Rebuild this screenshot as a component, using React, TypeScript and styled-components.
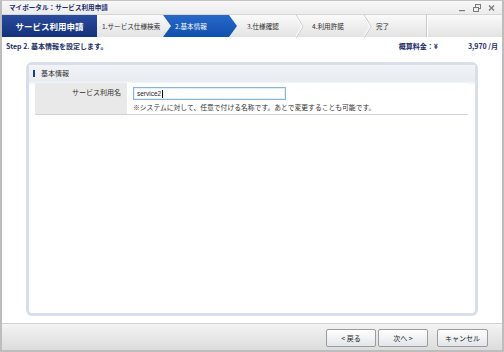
import React from "react";
import styled, { createGlobalStyle } from "styled-components";

const GlobalStyle = createGlobalStyle`
  html, body {
    margin: 0;
    padding: 0;
    background: #fff;
  }
  * {
    box-sizing: border-box;
  }
  body {
    font-family: "Noto Sans CJK JP", "Noto Sans", sans-serif;
  }
`;

const steps = [
  { label: "1.サービス仕様検索", width: 66, pad: 5, chevron: false },
  { label: "2.基本情報", width: 74, pad: 12, active: true, chevron: false },
  { label: "3.仕様確認", width: 59, pad: 10, chevron: true },
  { label: "4.利用許諾", width: 60, pad: 8, chevron: true },
  { label: "完了", width: 55, pad: 4, chevron: false, last: true },
];

function Chevron() {
  return (
    <ChevronSvg width="8" height="23" viewBox="0 0 8 23">
      <polyline points="0,0 7,11.5 0,23" fill="none" stroke="#c9c9c9" strokeWidth="1" />
      <polyline points="-1,0 6,11.5 -1,23" fill="none" stroke="#ffffff" strokeWidth="1" />
    </ChevronSvg>
  );
}

function WindowControls() {
  return (
    <Controls>
      <svg width="7" height="8" viewBox="0 0 7 8">
        <rect x="0" y="6" width="6" height="1.2" fill="#7a7a7a" />
      </svg>
      <svg width="8" height="8" viewBox="0 0 8 8">
        <rect x="2.5" y="0.5" width="5" height="4" fill="none" stroke="#7a7a7a" />
        <rect x="0.5" y="3.5" width="5" height="4" fill="#f0f0f0" stroke="#7a7a7a" />
      </svg>
      <svg width="7" height="8" viewBox="0 0 7 8">
        <path d="M1 1.5 L6 6.5 M6 1.5 L1 6.5" stroke="#7a7a7a" strokeWidth="1.3" />
      </svg>
    </Controls>
  );
}

export default function App() {
  return (
    <>
      <GlobalStyle />
      <Window>
        <TitleBar>
          <TitleText>マイポータル：サービス利用申請</TitleText>
          <WindowControls />
        </TitleBar>
        <TabBar>
          <Brand>サービス利用申請</Brand>
          {steps.map((s) => (
            <React.Fragment key={s.label}>
              <Step width={s.width} pad={s.pad} active={!!s.active} last={!!s.last}>
                {s.label}
              </Step>
              {s.chevron && <Chevron />}
            </React.Fragment>
          ))}
        </TabBar>
        <StepRow>
          <StepTitle>Step 2. 基本情報を設定します。</StepTitle>
          <Price>
            <PriceLabel>概算料金：¥</PriceLabel>
            <PriceValue>3,970 /月</PriceValue>
          </Price>
        </StepRow>
        <Panel>
          <PanelHeader>
            <HeaderBar />
            基本情報
          </PanelHeader>
          <PanelBody>
            <FormRow>
              <LabelCell>サービス利用名</LabelCell>
              <ValueCell>
                <NameInput>
                  service2
                  <Caret />
                </NameInput>
                <Hint>※システムに対して、任意で付ける名称です。あとで変更することも可能です。</Hint>
              </ValueCell>
            </FormRow>
          </PanelBody>
        </Panel>
        <Footer>
          <Button>&lt; 戻る</Button>
          <Button>次へ &gt;</Button>
          <CancelButton>キャンセル</CancelButton>
        </Footer>
      </Window>
    </>
  );
}

const Window = styled.div`
  width: 504px;
  height: 352px;
  display: flex;
  flex-direction: column;
  border: 2px solid #bdbdbd;
  border-top: 1px solid #c4c4c4;
  background: #fff;
`;

const TitleBar = styled.div`
  height: 13px;
  flex-shrink: 0;
  display: flex;
  align-items: center;
  justify-content: space-between;
  padding: 0 7px 0 7px;
  background: linear-gradient(#f7f7f7, #ececec);
`;

const TitleText = styled.div`
  font-size: 6.6px;
  font-weight: bold;
  color: #1b2d66;
  line-height: 1;
`;

const Controls = styled.div`
  display: flex;
  align-items: center;
  gap: 7px;
`;

const TabBar = styled.div`
  height: 23px;
  flex-shrink: 0;
  display: flex;
  align-items: stretch;
  background: linear-gradient(#fafafa, #e3e3e3);
  border-top: 1px solid #d6d6d6;
`;

const Brand = styled.div`
  width: 95px;
  flex-shrink: 0;
  display: flex;
  align-items: center;
  justify-content: center;
  background: linear-gradient(#2a4c9c, #13317c);
  color: #fff;
  font-size: 8.5px;
  font-weight: bold;
`;

interface StepProps {
  width: number;
  pad: number;
  active: boolean;
  last: boolean;
}

const Step = styled.div<StepProps>`
  width: ${(p) => p.width}px;
  flex-shrink: 0;
  display: flex;
  align-items: center;
  padding-left: ${(p) => p.pad}px;
  font-size: 6.6px;
  color: ${(p) => (p.active ? "#ffffff" : "#2e2e2e")};
  background: ${(p) => (p.active ? "linear-gradient(#2868c8, #0f4fae)" : "transparent")};
  clip-path: ${(p) =>
    p.active
      ? "polygon(0 0, calc(100% - 8px) 0, 100% 50%, calc(100% - 8px) 100%, 0 100%, 8px 50%)"
      : "none"};
  border-right: ${(p) => (p.last ? "1px solid #c9c9c9" : "none")};
  box-shadow: ${(p) => (p.last ? "1px 0 0 #ffffff" : "none")};
`;

const ChevronSvg = styled.svg`
  flex-shrink: 0;
  display: block;
`;

const StepRow = styled.div`
  height: 18px;
  flex-shrink: 0;
  display: flex;
  align-items: center;
  justify-content: space-between;
  padding: 0 4px;
`;

const StepTitle = styled.div`
  font-size: 7px;
  font-weight: bold;
  color: #1b2d66;
`;

const Price = styled.div`
  display: flex;
  align-items: center;
  gap: 30px;
  font-size: 7px;
  font-weight: bold;
  color: #1b2d66;
`;

const PriceLabel = styled.span``;

const PriceValue = styled.span``;

const Panel = styled.div`
  flex: 1;
  margin: 7px 24px;
  border: 3px solid #d8dfe9;
  border-radius: 6px;
  background: #fff;
  display: flex;
  flex-direction: column;
`;

const PanelHeader = styled.div`
  height: 16px;
  display: flex;
  align-items: center;
  gap: 6px;
  padding-left: 4px;
  font-size: 7px;
  color: #2e2e2e;
  background: linear-gradient(#f1f3f6, #e8ecf1);
`;

const HeaderBar = styled.span`
  width: 2px;
  height: 7px;
  background: #1a3a9a;
`;

const PanelBody = styled.div`
  padding: 2px 7px 0 6px;
  background: linear-gradient(#e8ecf1 0, #fff 4px);
`;

const FormRow = styled.div`
  display: flex;
  height: 32px;
  border-bottom: 1px solid #cdd3db;
`;

const LabelCell = styled.div`
  width: 92px;
  flex-shrink: 0;
  background: #e9e9e9;
  font-size: 7px;
  color: #2e2e2e;
  text-align: right;
  padding: 4px 6px 0 0;
`;

const ValueCell = styled.div`
  flex: 1;
  padding: 4px 0 0 6px;
  display: flex;
  flex-direction: column;
  gap: 3px;
  background: #fff;
`;

const NameInput = styled.div`
  width: 153px;
  height: 13px;
  border: 1px solid #86b5e0;
  box-shadow: inset 0 0 0 1px #e2eef9;
  padding-left: 3px;
  display: flex;
  align-items: center;
  font-family: "Liberation Sans", Arial, sans-serif;
  font-size: 6.5px;
  color: #222;
`;

const Caret = styled.span`
  width: 1px;
  height: 8px;
  margin-left: 1px;
  background: #000;
`;

const Hint = styled.div`
  font-size: 6.8px;
  color: #333;
  line-height: 1.2;
`;

const Footer = styled.div`
  height: 27px;
  flex-shrink: 0;
  display: flex;
  align-items: flex-start;
  justify-content: flex-end;
  padding: 5px 14px 0 0;
  background: linear-gradient(#f3f3f3, #dcdcdc);
  border-top: 1px solid #d2d2d2;
`;

const Button = styled.button`
  width: 50px;
  height: 18px;
  margin-left: 2px;
  padding: 0;
  border: 1px solid #9c9c9c;
  border-radius: 2px;
  background: linear-gradient(#ffffff, #e2e5e9);
  font-family: "Noto Sans CJK JP", sans-serif;
  font-size: 7px;
  color: #222;
  display: flex;
  align-items: center;
  justify-content: center;
`;

const CancelButton = styled(Button)`
  width: 51px;
  margin-left: 9px;
`;
